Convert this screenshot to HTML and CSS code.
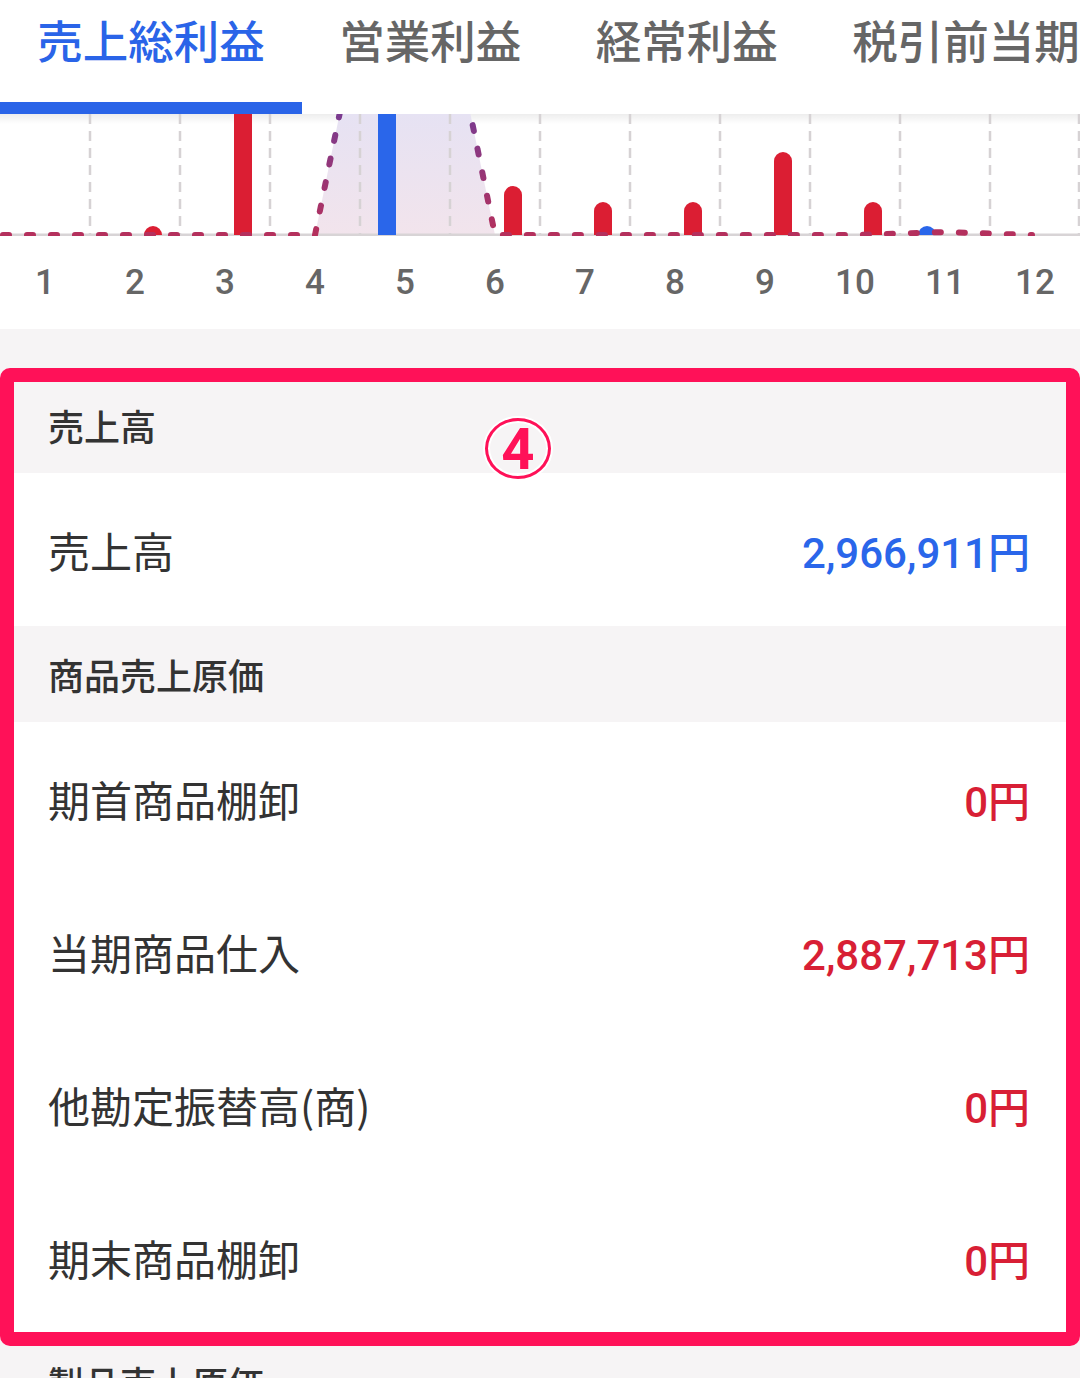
FILE: index.html
```html
<!DOCTYPE html>
<html lang="ja">
<head>
<meta charset="utf-8">
<title>損益</title>
<link rel="stylesheet" href="styles.css">
</head>
<body>
<nav class="tabs">
  <div class="tab active">売上総利益</div>
  <div class="tab">営業利益</div>
  <div class="tab">経常利益</div>
  <div class="tab">税引前当期純利益</div>
</nav>

<section class="chart">
  <svg class="plot" width="1080" height="122" viewBox="0 0 1080 122">
    <defs>
      <linearGradient id="fillg" x1="0" y1="0" x2="0" y2="121" gradientUnits="userSpaceOnUse">
        <stop offset="0" stop-color="#e6e2f3"/>
        <stop offset="1" stop-color="#f2e4ec"/>
      </linearGradient>
      <linearGradient id="lineg" x1="0" y1="0" x2="0" y2="121" gradientUnits="userSpaceOnUse">
        <stop offset="0" stop-color="#7a3b90"/>
        <stop offset="1" stop-color="#b5305c"/>
      </linearGradient>
    </defs>
    <polygon points="315,121 405,-322 495,121" fill="url(#fillg)"/>
    <g stroke="#d6d2d4" stroke-width="2.5" stroke-dasharray="10 7">
      <line x1="90" y1="0" x2="90" y2="121"/>
      <line x1="180" y1="0" x2="180" y2="121"/>
      <line x1="270" y1="0" x2="270" y2="121"/>
      <line x1="360" y1="0" x2="360" y2="121"/>
      <line x1="450" y1="0" x2="450" y2="121"/>
      <line x1="540" y1="0" x2="540" y2="121"/>
      <line x1="630" y1="0" x2="630" y2="121"/>
      <line x1="720" y1="0" x2="720" y2="121"/>
      <line x1="810" y1="0" x2="810" y2="121"/>
      <line x1="900" y1="0" x2="900" y2="121"/>
      <line x1="990" y1="0" x2="990" y2="121"/>
      <line x1="1079" y1="0" x2="1079" y2="121"/>
    </g>
    <line x1="0" y1="121" x2="1080" y2="121" stroke="#d8d4d6" stroke-width="3"/>
    <g fill="#db1e33">
      <path d="M144,121 A9,9 0 0 1 162,121 Z"/>
      <rect x="234" y="-5" width="18" height="126"/>
      <path d="M504,121 V81 A9,9 0 0 1 522,81 V121 Z"/>
      <path d="M594,121 V97 A9,9 0 0 1 612,97 V121 Z"/>
      <path d="M684,121 V97 A9,9 0 0 1 702,97 V121 Z"/>
      <path d="M774,121 V47 A9,9 0 0 1 792,47 V121 Z"/>
      <path d="M864,121 V97 A9,9 0 0 1 882,97 V121 Z"/>
    </g>
    <g fill="#2a66ea">
      <rect x="378" y="-5" width="18" height="126"/>
      <path d="M918,121 A9,9 0 0 1 936,121 Z"/>
    </g>
    <polyline points="3,121 45,121 135,121 225,121 315,121 405,-322 495,121 585,121 675,121 765,121 855,121 945,118 1032,121"
      fill="none" stroke="url(#lineg)" stroke-width="6" stroke-linecap="round" stroke-linejoin="round" stroke-dasharray="6 18"/>
  </svg>
  <div class="axis">
    <span>1</span><span>2</span><span>3</span><span>4</span><span>5</span><span>6</span>
    <span>7</span><span>8</span><span>9</span><span>10</span><span>11</span><span>12</span>
  </div>
</section>

<main class="list">
  <div class="group">売上高</div>
  <div class="row"><span class="label">売上高</span><span class="value blue">2,966,911円</span></div>
  <div class="group">商品売上原価</div>
  <div class="row"><span class="label">期首商品棚卸</span><span class="value red">0円</span></div>
  <div class="row"><span class="label">当期商品仕入</span><span class="value red">2,887,713円</span></div>
  <div class="row"><span class="label">他勘定振替高(商)</span><span class="value red">0円</span></div>
  <div class="row"><span class="label">期末商品棚卸</span><span class="value red">0円</span></div>
  <div class="group">製品売上原価</div>
</main>

<div class="annot"></div>
<div class="badge">4</div>
</body>
</html>
```
FILE: styles.css
```css
html, body {
  margin: 0;
  padding: 0;
}
body {
  width: 1080px;
  height: 1378px;
  overflow: hidden;
  position: relative;
  background: #f6f4f5;
  font-family: "Noto Sans CJK JP", sans-serif;
}
.tabs {
  display: flex;
  height: 114px;
  background: #fff;
  overflow: hidden;
  white-space: nowrap;
}
.tab {
  flex-shrink: 0;
  box-sizing: border-box;
  height: 114px;
  padding: 9px 37.25px 0;
  font-size: 45.5px;
  line-height: 60px;
  font-weight: 500;
  color: #666;
}
.tab.active {
  color: #2a64e8;
  border-bottom: 12px solid #2a64e8;
}
.chart {
  background: linear-gradient(rgba(0,0,0,0.07), rgba(0,0,0,0) 10px), #fff;
  height: 215px;
}
.plot {
  display: block;
}
.axis {
  display: flex;
  height: 93px;
}
.axis span {
  width: 90px;
  text-align: center;
  font-family: Roboto, sans-serif;
  font-weight: 500;
  font-size: 35px;
  line-height: 93px;
  color: #666;
}
.list {
  margin-top: 48px;
}
.group {
  box-sizing: border-box;
  height: 96px;
  padding-left: 48px;
  display: flex;
  align-items: center;
  font-size: 36px;
  font-weight: 500;
  color: #333;
  background: #f6f4f5;
}
.row {
  box-sizing: border-box;
  height: 153px;
  padding: 0 50px 0 48px;
  display: flex;
  align-items: center;
  justify-content: space-between;
  background: #fff;
}
.label {
  font-size: 42px;
  color: #333;
}
.value {
  font-family: Roboto, "Noto Sans CJK JP", sans-serif;
  font-weight: 500;
  font-size: 42px;
}
.value.blue { color: #2a66ea; }
.value.red { color: #d81f35; }
.annot {
  position: absolute;
  left: 0;
  top: 368px;
  width: 1080px;
  height: 978px;
  box-sizing: border-box;
  border: 14px solid #ff1158;
  border-radius: 10px;
}
.badge {
  position: absolute;
  left: 485px;
  top: 418px;
  width: 66px;
  height: 61px;
  box-sizing: border-box;
  border: 3.5px solid #ff1158;
  border-radius: 50%;
  box-shadow: 0 0 0 2px #fff, inset 0 0 0 2px #fff;
  display: flex;
  align-items: center;
  justify-content: center;
  font-family: Roboto, sans-serif;
  font-weight: 700;
  font-size: 58px;
  line-height: 1;
  color: #ff1158;
  text-shadow: 0 0 2px #fff;
}
```
